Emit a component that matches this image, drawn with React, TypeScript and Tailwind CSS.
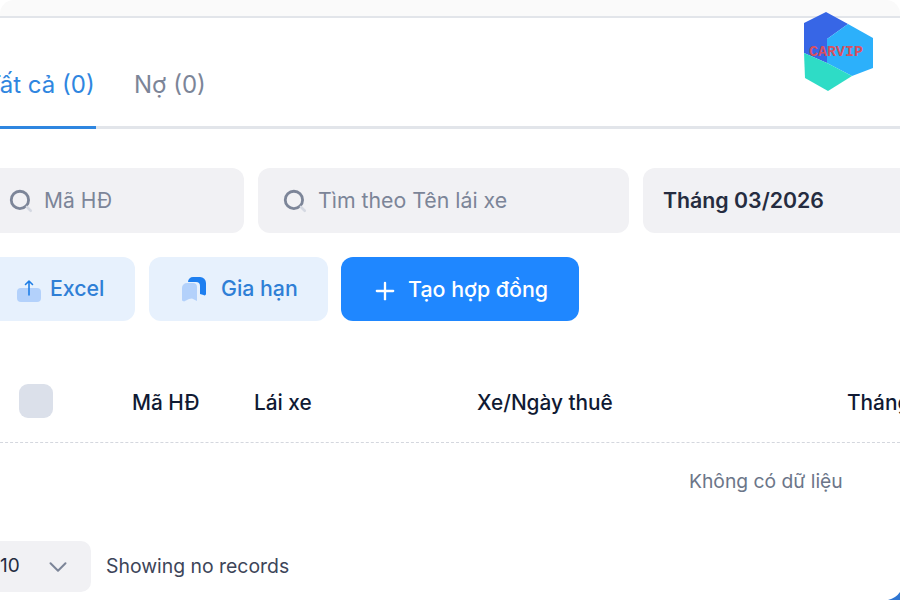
import { ChevronDown, Plus } from "lucide-react";

function SearchIcon() {
    return (
        <svg width="26" height="26" viewBox="0 0 24 24" fill="none" className="shrink-0">
            <circle cx="11" cy="11" r="8" stroke="#7c8598" strokeWidth="2.6" />
            <path d="M17.5 17.5L21 21" stroke="#d5d9e2" strokeWidth="2.4" strokeLinecap="round" />
        </svg>
    );
}

function UploadIcon() {
    return (
        <svg width="26" height="26" viewBox="0 0 26 26" fill="none" className="shrink-0">
            <path d="M5 12h16a4 4 0 0 1 4 4v6a4 4 0 0 1-4 4H5a4 4 0 0 1-4-4v-6a4 4 0 0 1 4-4z" fill="#b3d1fb" />
            <path d="M13 19V5M9.500 8.500L13 5l3.500 3.500" stroke="#1e7ee6" strokeWidth="1.6" strokeLinecap="round" strokeLinejoin="round" />
        </svg>
    );
}

function BookmarkIcon() {
    return (
        <svg width="26" height="26" viewBox="0 0 26 26" fill="none" className="shrink-0">
            <path d="M1 12a5 5 0 0 1 5-5h6a4 4 0 0 1 4 4v14l-5-2.500-3 .5-5 2.500-2-1z" fill="#b3d1fb" />
            <path d="M7 6a5 5 0 0 1 5-5h7a6 6 0 0 1 6 6v11a1.500 1.500 0 0 1-2.500 1L19 18v-8a4 4 0 0 0-4-4z" fill="#1e7ff0" />
        </svg>
    );
}

function Logo() {
    return (
        <div className="absolute left-[804px] top-[12px] w-[69px] h-[79px]">
            <svg width="69" height="79" viewBox="0 0 69 79">
                <path d="M22 0 L44 12 L23 27 L23 51 L0 41 L0 11 Z" fill="#3766e6" />
                <path d="M44 12 L69 26 L69 56 L48 64 L23 51 L23 27 Z" fill="#2cb0fb" />
                <path d="M0 41 L23 51 L48 64 L24 79 L1 66 Z" fill="#2edcc6" />
            </svg>
            <span className="absolute left-[5px] top-[32px] text-[15px] leading-[18px] font-bold text-[#d9505f] font-['Liberation_Mono',monospace]">CARVIP</span>
        </div>
    );
}

export default function App() {
    return (
        <div className="relative w-[900px] h-[600px] overflow-hidden bg-white font-['Inter',sans-serif]">
            <div className="h-[18px] rounded-t-[14px] bg-[#fafafa] border-b-2 border-[#e2e5ea]" />

            <div className="-ml-[30px]">
                <div className="flex h-[111px] border-b-[3px] border-[#e2e5ea]">
                    <div className="flex gap-[38px]">
                        <div className="h-[111px] w-[126px] shrink-0 pt-[50px] pl-[16px] border-b-[3px] border-[#2f86e0] text-[24px] leading-[34px] text-[#2f86e0] whitespace-nowrap">Tất cả (0)</div>
                        <div className="pt-[50px] text-[24px] leading-[34px] text-[#7c8598] whitespace-nowrap">Nợ (0)</div>
                    </div>
                </div>

                <div className="flex gap-[14px] mt-[39px] h-[65px]">
                    <div className="flex items-center gap-[10px] w-[274px] shrink-0 pl-[38px] rounded-[12px] bg-[#f1f1f4] text-[21px] text-[#7c8598]">
                        <SearchIcon />
                        Mã HĐ
                    </div>
                    <div className="flex items-center gap-[10px] w-[371px] shrink-0 pl-[24px] rounded-[12px] bg-[#f1f1f4] text-[21.300px] text-[#7c8598]">
                        <SearchIcon />
                        Tìm theo Tên lái xe
                    </div>
                    <div className="flex items-center w-[300px] shrink-0 pl-[20px] rounded-[12px] bg-[#f1f1f4] text-[21.300px] font-semibold text-[#252c40] whitespace-nowrap">Tháng 03/2026</div>
                </div>

                <div className="flex gap-[14px] mt-[24px] h-[64px]">
                    <div className="flex items-center gap-[8px] w-[165px] shrink-0 pl-[46px] rounded-[12px] bg-[#e7f1fd] text-[21.300px] font-medium text-[#2f7fd6]">
                        <UploadIcon />
                        Excel
                    </div>
                    <div className="flex items-center gap-[14px] w-[179px] shrink-0 pl-[32px] rounded-[12px] bg-[#e7f1fd] text-[21.300px] font-medium text-[#2f7fd6]">
                        <BookmarkIcon />
                        Gia hạn
                    </div>
                    <div className="flex items-center gap-[9px] w-[238px] shrink-0 -ml-px pl-[30px] rounded-[12px] bg-[#1f87ff] text-[21.400px] font-medium text-white">
                        <Plus size={28} strokeWidth={2} className="mt-[3px]" />
                        Tạo hợp đồng
                    </div>
                </div>

                <div className="flex items-center h-[122px] pt-[42px] border-b border-dashed border-[#d4d7de] text-[20.800px] font-medium text-[#101a33]">
                    <div className="ml-[49px] -mt-[4px] w-[34px] h-[34px] shrink-0 rounded-[9px] bg-[#dbe0ea]" />
                    <div className="ml-[79px] w-[122px] shrink-0">Mã HĐ</div>
                    <div className="w-[223px] shrink-0">Lái xe</div>
                    <div className="w-[370px] shrink-0">Xe/Ngày thuê</div>
                    <div className="shrink-0 whitespace-nowrap">Tháng</div>
                </div>

                <div className="flex h-[77px] pl-[719px] pt-[24px] text-[19.300px] leading-[28px] text-[#6c7689]">Không có dữ liệu</div>

                <div className="flex items-center gap-[15px] mt-[21px]">
                    <div className="flex items-center justify-between w-[121px] shrink-0 h-[51px] pl-[30px] pr-[18px] rounded-[10px] bg-[#f1f1f4] text-[19px] text-[#252c40]">
                        10
                        <ChevronDown size={30} strokeWidth={1.6} className="text-[#7c8598]" />
                    </div>
                    <span className="text-[19.400px] text-[#3d4559]">Showing no records</span>
                </div>
            </div>

            <Logo />

            <svg className="absolute right-0 bottom-0" width="12" height="8" viewBox="0 0 12 8">
                <path d="M12 0 L12 8 L0 8 Q8 6 12 0Z" fill="#2f76d2" />
            </svg>
        </div>
    );
}
